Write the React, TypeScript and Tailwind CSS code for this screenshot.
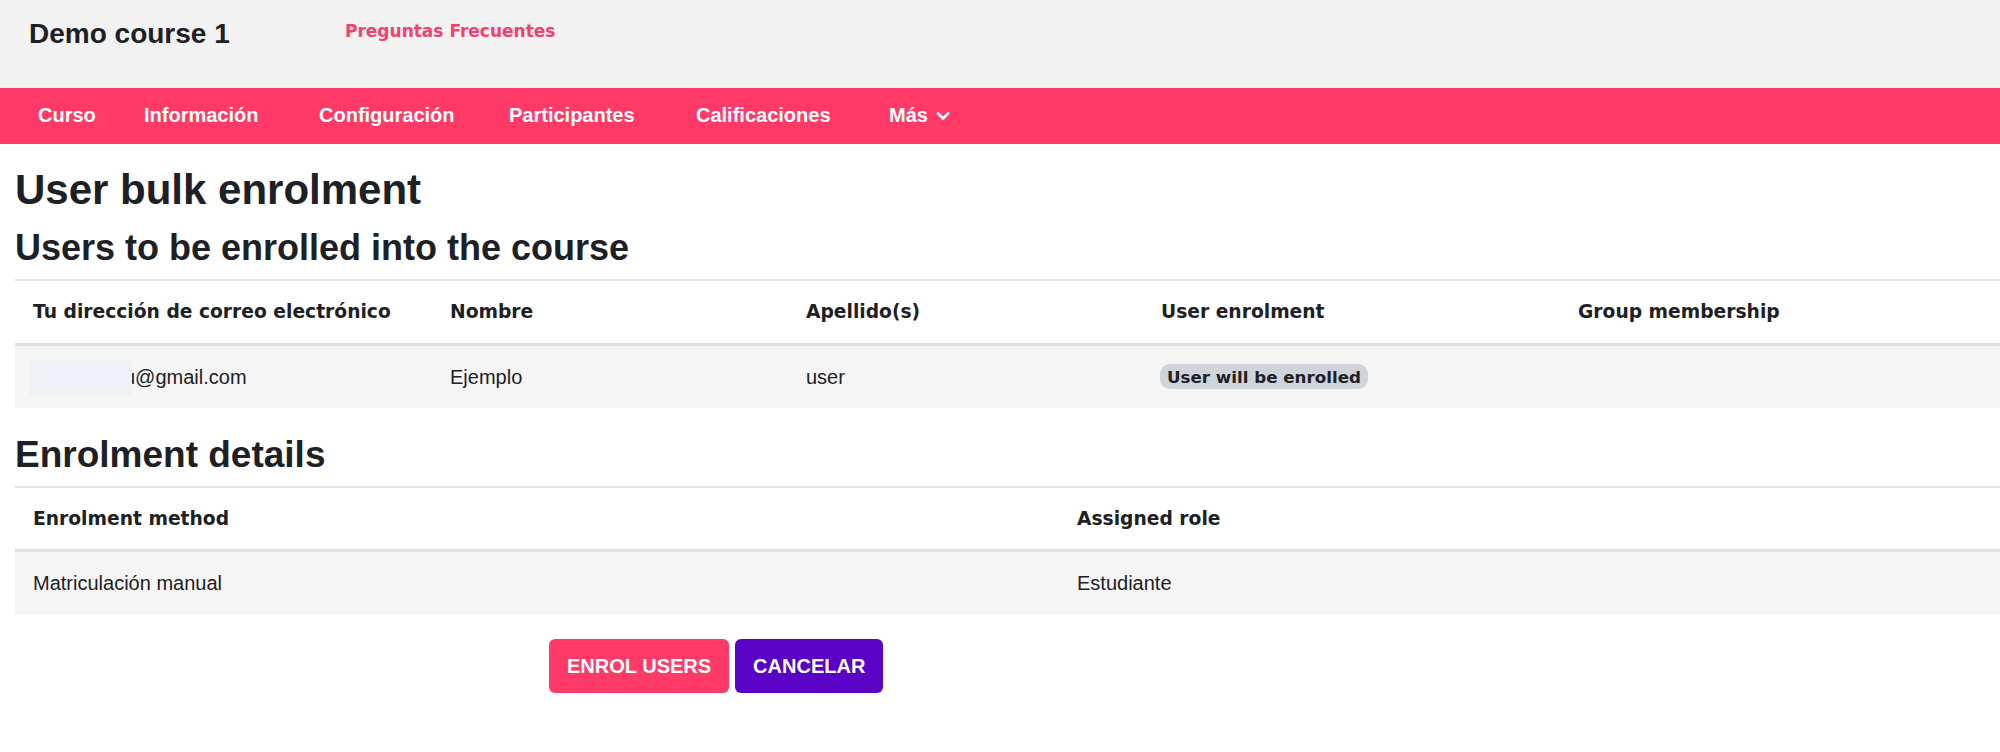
import { ChevronDown } from 'lucide-react'

const navItems = [
    { label: 'Curso', width: 'w-[106px]' },
    { label: 'Información', width: 'w-[175px]' },
    { label: 'Configuración', width: 'w-[190px]' },
    { label: 'Participantes', width: 'w-[187px]' },
    { label: 'Calificaciones', width: 'w-[193px]' },
]

const thCell = "px-[18px] font-['DejaVu_Sans',sans-serif] text-[18.7px] font-bold leading-[22px]"
const tdCell = 'px-[18px] text-[20px] leading-[24px]'

export default function App() {
    return (
        <div className="min-h-screen bg-white font-['Liberation_Sans',Arial,sans-serif] text-[#1d2125]">
            {/* Course header */}
            <header className="flex h-[88px] items-start bg-[#f2f2f2]">
                <div className="ml-[29px] mt-[17px] w-[316px] text-[28px] font-bold leading-[34px]">Demo course 1</div>
                <a className="mt-[21px] font-['DejaVu_Sans',sans-serif] text-[17px] font-bold leading-[20px] text-[#f5406c]">
                    Preguntas Frecuentes
                </a>
            </header>

            {/* Secondary navigation */}
            <nav className="flex h-[56px] items-center bg-[#ff3a67] pb-[2px] pl-[38px] text-[20px] font-bold leading-[24px] text-white">
                {navItems.map((item) => (
                    <span key={item.label} className={item.width}>{item.label}</span>
                ))}
                <span className="flex items-center gap-[5px]">
                    Más
                    <ChevronDown size={20} strokeWidth={3.2} className="mt-[2px]" />
                </span>
            </nav>

            <main className="pl-[15px]">
                <h1 className="mt-[21px] text-[42px] font-bold leading-[50px]">User bulk enrolment</h1>
                <h2 className="mt-[11px] text-[36px] font-bold leading-[43px]">Users to be enrolled into the course</h2>

                {/* Users table */}
                <div className="mt-[10px] border-t-2 border-[#e2e4e8]">
                    <div className="grid h-[65px] grid-cols-[417px_356px_355px_417px_1fr] items-center border-b-[3px] border-[#dde1e5]">
                        <div className={thCell}>Tu dirección de correo electrónico</div>
                        <div className={thCell}>Nombre</div>
                        <div className={thCell}>Apellido(s)</div>
                        <div className={thCell}>User enrolment</div>
                        <div className={thCell}>Group membership</div>
                    </div>
                    <div className="grid h-[62px] grid-cols-[417px_356px_355px_417px_1fr] items-center bg-[#f5f5f5]">
                        <div className="flex items-center pl-[14px] text-[20px] leading-[24px]">
                            <span className="relative z-10 h-[35px] w-[103px] bg-[#eef1f5]" />
                            <span className="-ml-[8px]">u@gmail.com</span>
                        </div>
                        <div className={tdCell}>Ejemplo</div>
                        <div className={tdCell}>user</div>
                        <div className="px-[17px]">
                            <span className="inline-flex h-[25px] items-center rounded-[10px] bg-[#ced4da] px-[7px] font-['DejaVu_Sans',sans-serif] text-[16.7px] font-bold leading-[20px]">
                                User will be enrolled
                            </span>
                        </div>
                        <div />
                    </div>
                </div>

                <h2 className="mt-[25px] text-[37px] font-bold leading-[43px]">Enrolment details</h2>

                {/* Enrolment details table */}
                <div className="mt-[10px] border-t-2 border-[#e2e4e8]">
                    <div className="grid h-[64px] grid-cols-[1044px_1fr] items-center border-b-[3px] border-[#dde1e5]">
                        <div className={thCell}>Enrolment method</div>
                        <div className={thCell}>Assigned role</div>
                    </div>
                    <div className="grid h-[62px] grid-cols-[1044px_1fr] items-center bg-[#f5f5f5]">
                        <div className={tdCell}>Matriculación manual</div>
                        <div className={tdCell}>Estudiante</div>
                    </div>
                </div>

                <div className="ml-[534px] mt-[25px] flex gap-[6px]">
                    <button className="h-[54px] rounded-[6px] bg-[#ff3a67] px-[18px] text-[20px] font-bold text-white">ENROL USERS</button>
                    <button className="h-[54px] rounded-[6px] bg-[#5a02c5] px-[18px] text-[20px] font-bold text-white">CANCELAR</button>
                </div>
            </main>
        </div>
    )
}
